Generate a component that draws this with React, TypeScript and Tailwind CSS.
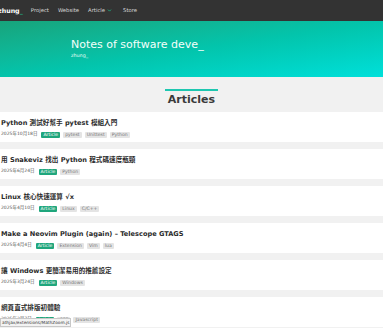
import { ChevronDown } from "lucide-react"

const posts = [
  { title: "Python 測試好幫手 pytest 模組入門", date: "2025年10月18日", tags: ["pytest", "Unittest", "Python"] },
  { title: "用 Snakeviz 找出 Python 程式碼速度瓶頸", date: "2025年6月24日", tags: ["Python"] },
  { title: "Linux 核心快速運算 √x", date: "2025年4月10日", tags: ["Linux", "C/C++"] },
  { title: "Make a Neovim Plugin (again) – Telescope GTAGS", date: "2025年4月4日", tags: ["Extension", "Vim", "lua"] },
  { title: "讓 Windows 更簡潔易用的推薦設定", date: "2025年3月24日", tags: ["Windows"] },
  { title: "網頁直式排版初體驗", date: "2025年2月7日", tags: ["CSS", "Javascript"] },
]

const font = { fontFamily: '"DejaVu Sans", "Noto Sans CJK TC", sans-serif' }

export default function App() {
  return (
    <div className="relative h-[328px] w-[383px] overflow-hidden bg-[#f1f1f1] text-[#333]" style={font}>
      {/* navbar */}
      <nav className="flex h-[21px] items-center bg-[#333333] text-[5.3px] text-[#d8d8d8]">
        <span className="-ml-[2px] text-[6.3px] font-bold text-white">
          zhung<span className="text-[#1fb585]">_</span>
        </span>
        <span className="ml-[8px]">Project</span>
        <span className="ml-[9px]">Website</span>
        <span className="ml-[9px] flex items-center gap-[2px]">
          Article
          <ChevronDown className="h-[5px] w-[5px] text-[#1fb585]" strokeWidth={4} />
        </span>
        <span className="ml-[11px]">Store</span>
      </nav>

      {/* hero */}
      <header className="flex h-[56px] flex-col justify-center bg-linear-to-br from-[#17a47b] via-[#03c4ab] to-[#00e0da] pl-[71px]">
        <h1 className="text-[11px] leading-[13px] text-[#f4fffb]">Notes of software deve_</h1>
        <p className="mt-[1px] text-[4.8px] text-[#e6fff7]">zhung_</p>
      </header>

      {/* section title */}
      <div className="flex h-[35px] flex-col items-center pt-[12px]">
        <div className="h-[2px] w-[53px] bg-[#1ec7b0]" />
        <h2 className="mt-[2px] text-[11px] font-bold leading-[13px] text-[#3a3a3a]">Articles</h2>
      </div>

      {/* articles */}
      <div className="flex flex-col gap-[7px]">
        {posts.map((p) => (
          <div key={p.title} className="h-[30px] bg-white pl-[1px] pt-[7px]">
            <div className="text-[6.6px] font-bold leading-[9px] text-[#2b2b2b]">{p.title}</div>
            <div className="mt-[3px] flex h-[7px] items-center">
              <span className="mr-[4px] text-[4.5px] text-[#555]">{p.date}</span>
              <span className="mr-[3px] rounded-[1px] bg-[#1fa67c] px-[2px] text-[4.6px] leading-[6px] text-white">
                Article
              </span>
              {p.tags.map((t) => (
                <span key={t} className="mr-[3px] rounded-[1px] bg-[#e4e4e4] px-[2px] text-[4.6px] leading-[6px] text-[#777]">
                  {t}
                </span>
              ))}
            </div>
          </div>
        ))}
      </div>

      {/* browser status bubble */}
      <div className="absolute bottom-[1px] left-0 border border-[#c8c8c8] bg-[#f3f3f3] px-[1px] text-[4.3px] leading-[7px] text-[#333]">
        athjax/extensions/MathZoom.js
      </div>
    </div>
  )
}
